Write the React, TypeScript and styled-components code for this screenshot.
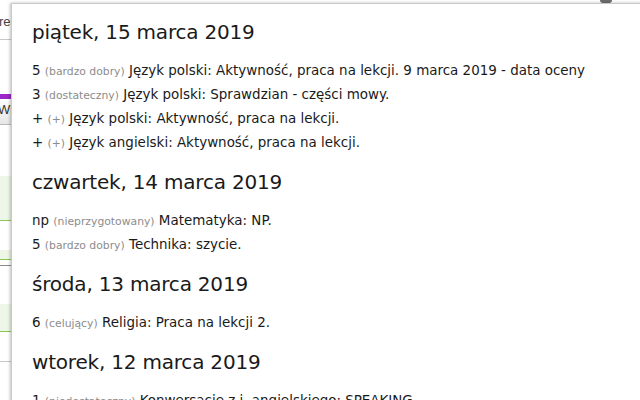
import styled, { createGlobalStyle } from 'styled-components'

const GlobalStyle = createGlobalStyle`
   html, body {
      margin: 0;
      padding: 0;
      background: #ffffff;
      overflow: hidden;
   }
   body {
      font-family: "DejaVu Sans", "Liberation Sans", sans-serif;
   }
`

//* Page behind the popup
const Page = styled.div`
   position: relative;
   width: 640px;
   height: 400px;
   overflow: hidden;
   background: #ffffff;
`

const TopRow = styled.div`
   height: 39px;
   border-bottom: 1px solid #c8c8c8;
   display: flex;
   justify-content: space-between;
   align-items: flex-start;
`

const SearchText = styled.span`
   font-family: "Liberation Sans", Arial, sans-serif;
   font-size: 13px;
   color: #444;
   margin-top: 14px;
   margin-left: -1px;
`

const CloseNub = styled.span`
   width: 12px;
   height: 14px;
   margin-top: -11px;
   margin-right: 28px;
   border-radius: 3px;
   background: #6d6d6d;
`

const Gap = styled.div<{ $h: number; $line?: string }>`
   height: ${p => p.$h}px;
   border-bottom: ${p => (p.$line ? `1px solid ${p.$line}` : 'none')};
`

const TabBar = styled.div`
   height: 5px;
   background: #9a28c9;
`

const Tab = styled.div`
   height: 25px;
   border-bottom: 1px solid #b9b9b9;
   background: linear-gradient(#ffffff, #e6e6e6);
   font-family: "Liberation Sans", Arial, sans-serif;
   font-size: 13px;
   line-height: 22px;
   color: #333;
   text-indent: -2px;
`

const GreenRow = styled.div<{ $h: number }>`
   height: ${p => p.$h}px;
   background: #eef7e7;
   border-bottom: 1px solid #8cc65b;
`

//* Popup with the grades
const Popup = styled.div`
   position: absolute;
   left: 11px;
   top: 3px;
   width: 660px;
   height: 420px;
   background: #ffffff;
   border-top: 1px solid #c9c9c9;
   border-left: 1px solid #c9c9c9;
   box-shadow: -1px 0 3px rgba(0, 0, 0, 0.25);
   padding: 8px 20px 0 20px;
   box-sizing: border-box;
   color: #1c1c1c;
`

const Day = styled.section`
   display: flex;
   flex-direction: column;
   margin-bottom: 7px;
`

const DayTitle = styled.h2`
   margin: 0 0 7px 0;
   font-weight: normal;
   font-size: 20px;
   line-height: 40px;
   color: #1a1a1a;
   letter-spacing: -0.2px;
`

const Grade = styled.div`
   height: 24px;
   font-size: 13.45px;
   line-height: 24px;
   white-space: nowrap;
   color: #1a1a1a;
`

const GradeDesc = styled.span`
   font-size: 10.8px;
   line-height: 1;
   color: #8c8c8c;
`

type GradeItem = { value: string, desc: string, text: string }
type DayItem = { title: string, grades: GradeItem[] }

const days: DayItem[] = [
   {
      title: 'piątek, 15 marca 2019',
      grades: [
         { value: '5', desc: 'bardzo dobry', text: 'Język polski: Aktywność, praca na lekcji. 9 marca 2019 - data oceny' },
         { value: '3', desc: 'dostateczny', text: 'Język polski: Sprawdzian - części mowy.' },
         { value: '+', desc: '+', text: 'Język polski: Aktywność, praca na lekcji.' },
         { value: '+', desc: '+', text: 'Język angielski: Aktywność, praca na lekcji.' },
      ]
   },
   {
      title: 'czwartek, 14 marca 2019',
      grades: [
         { value: 'np', desc: 'nieprzygotowany', text: 'Matematyka: NP.' },
         { value: '5', desc: 'bardzo dobry', text: 'Technika: szycie.' },
      ]
   },
   {
      title: 'środa, 13 marca 2019',
      grades: [
         { value: '6', desc: 'celujący', text: 'Religia: Praca na lekcji 2.' },
      ]
   },
   {
      title: 'wtorek, 12 marca 2019',
      grades: [
         { value: '1', desc: 'niedostateczny', text: 'Konwersacje z j. angielskiego: SPEAKING' },
      ]
   },
]

const App: React.FC = () => {
   return (
      <Page>
         <GlobalStyle />
         <TopRow>
            <SearchText>rea</SearchText>
            <CloseNub />
         </TopRow>
         <Gap $h={54} />
         <TabBar />
         <Tab>Wia</Tab>
         <Gap $h={51} />
         <GreenRow $h={44} />
         <Gap $h={29} />
         <GreenRow $h={9} />
         <Gap $h={5} $line='#8a8a8a' />
         <Gap $h={38} />
         <GreenRow $h={27} />
         <Gap $h={29} $line='#c8c8c8' />
         <Popup>
            {days.map((day, i) => (
               <Day key={i}>
                  <DayTitle>{day.title}</DayTitle>
                  {day.grades.map((g, j) => (
                     <Grade key={j}>
                        {g.value} <GradeDesc>({g.desc})</GradeDesc> {g.text}
                     </Grade>
                  ))}
               </Day>
            ))}
         </Popup>
      </Page>
   )
}

export default App
